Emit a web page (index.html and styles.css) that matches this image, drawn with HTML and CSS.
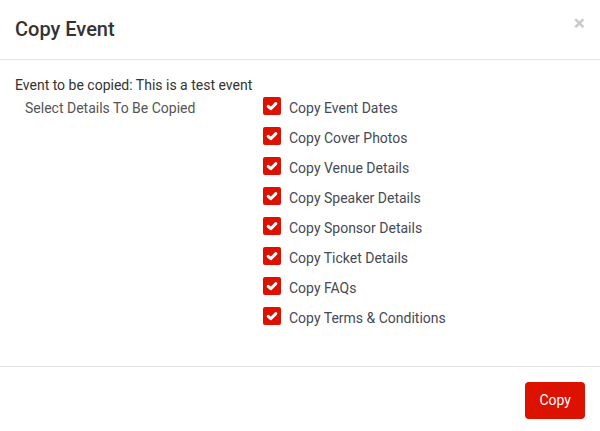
FILE: index.html
```html
<!DOCTYPE html>
<html lang="en">
<head>
    <meta charset="UTF-8">
    <meta name="viewport" content="width=device-width, initial-scale=1.0">
    <title>Copy Event</title>
    <link rel="stylesheet" href="styles.css">
</head>
<body>
    <div class="modal">
        <div class="modal-header">
            <h4 class="modal-title">Copy Event</h4>
            <button class="close" type="button">&times;</button>
        </div>

        <div class="modal-body">
            <p class="event-name">Event to be copied: This is a test event</p>
            <div class="details">
                <div class="details-label">Select Details To Be Copied</div>
                <ul class="options">
                    <li><span class="check"><svg viewBox="0 0 18 18"><path d="M5.2 9.3l2.6 2.4L12.8 6.6"/></svg></span><span class="option-text">Copy Event Dates</span></li>
                    <li><span class="check"><svg viewBox="0 0 18 18"><path d="M5.2 9.3l2.6 2.4L12.8 6.6"/></svg></span><span class="option-text">Copy Cover Photos</span></li>
                    <li><span class="check"><svg viewBox="0 0 18 18"><path d="M5.2 9.3l2.6 2.4L12.8 6.6"/></svg></span><span class="option-text">Copy Venue Details</span></li>
                    <li><span class="check"><svg viewBox="0 0 18 18"><path d="M5.2 9.3l2.6 2.4L12.8 6.6"/></svg></span><span class="option-text">Copy Speaker Details</span></li>
                    <li><span class="check"><svg viewBox="0 0 18 18"><path d="M5.2 9.3l2.6 2.4L12.8 6.6"/></svg></span><span class="option-text">Copy Sponsor Details</span></li>
                    <li><span class="check"><svg viewBox="0 0 18 18"><path d="M5.2 9.3l2.6 2.4L12.8 6.6"/></svg></span><span class="option-text">Copy Ticket Details</span></li>
                    <li><span class="check"><svg viewBox="0 0 18 18"><path d="M5.2 9.3l2.6 2.4L12.8 6.6"/></svg></span><span class="option-text">Copy FAQs</span></li>
                    <li><span class="check"><svg viewBox="0 0 18 18"><path d="M5.2 9.3l2.6 2.4L12.8 6.6"/></svg></span><span class="option-text">Copy Terms &amp; Conditions</span></li>
                </ul>
            </div>
        </div>

        <div class="modal-footer">
            <button class="btn-copy" type="button">Copy</button>
        </div>
    </div>
</body>
</html>
```

FILE: styles.css
```css
body {
    margin: 0;
    font-family: Roboto, "Liberation Sans", Arial, sans-serif;
    font-size: 14px;
    line-height: 20px;
    color: #333;
    background-color: #fff;
}
.modal {
    width: 600px;
    background-color: #fff;
}
.modal-header {
    display: flex;
    justify-content: space-between;
    align-items: flex-start;
    padding: 15px;
    border-bottom: 1px solid #e5e5e5;
}
.modal-title {
    margin: 0;
    font-size: 20px;
    font-weight: 500;
    line-height: 28.5px;
    color: #333;
}
.close {
    margin-top: -2px;
    padding: 0;
    border: none;
    background: none;
    font-family: inherit;
    font-size: 21px;
    font-weight: bold;
    line-height: 1;
    color: #c9c9c9;
    cursor: pointer;
}
.modal-body {
    padding: 15px 15px 31px;
}
.event-name {
    margin: 0;
}
.details {
    display: grid;
    grid-template-columns: 248px 1fr;
}
.details-label {
    padding: 3px 0 0 10px;
    color: #555;
}
.options {
    list-style: none;
    margin: 0;
    padding: 0;
}
.options li {
    display: flex;
    align-items: flex-start;
    height: 30px;
    padding-top: 2px;
    box-sizing: border-box;
}
.check {
    display: block;
    width: 18px;
    height: 18px;
    border-radius: 2px;
    background-color: #dc1100;
    flex-shrink: 0;
}
.check svg {
    display: block;
    width: 18px;
    height: 18px;
    fill: none;
    stroke: #fff;
    stroke-width: 3;
    stroke-linecap: round;
    stroke-linejoin: round;
}
.option-text {
    margin: 1px 0 0 8px;
    color: #464a55;
}
.modal-footer {
    display: flex;
    justify-content: flex-end;
    padding: 15px;
    border-top: 1px solid #e5e5e5;
}
.btn-copy {
    height: 37px;
    padding: 0 14px;
    border: none;
    border-radius: 4px;
    background-color: #dc1100;
    color: #fff;
    font-family: inherit;
    font-size: 14px;
    cursor: pointer;
}
```
